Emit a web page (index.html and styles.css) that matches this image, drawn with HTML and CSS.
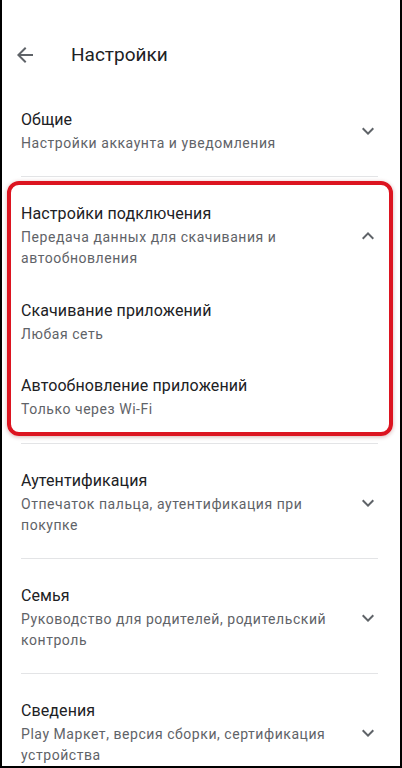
FILE: index.html
```html
<!DOCTYPE html>
<html lang="ru">
<head>
<meta charset="utf-8">
<title>Настройки</title>
<link rel="stylesheet" href="styles.css">
</head>
<body>
<div class="screen">
  <header class="topbar">
    <svg class="back" viewBox="0 0 24 24" width="24" height="24"><path d="M20 11H7.83l5.59-5.59L12 4l-8 8 8 8 1.41-1.41L7.83 13H20v-2z"/></svg>
    <h1 class="page-title">Настройки</h1>
  </header>
  <main class="list">
    <section class="group">
      <div class="row">
        <div class="text">
          <div class="title">Общие</div>
          <div class="sub">Настройки аккаунта и уведомления</div>
        </div>
        <svg class="chev" viewBox="0 0 24 24" width="24" height="24"><path d="M16.59 8.59L12 13.17 7.41 8.59 6 10l6 6 6-6z"/></svg>
      </div>
    </section>
    <section class="group highlighted">
      <div class="row">
        <div class="text">
          <div class="title">Настройки подключения</div>
          <div class="sub">Передача данных для скачивания и автообновления</div>
        </div>
        <svg class="chev" viewBox="0 0 24 24" width="24" height="24"><path d="M7.41 15.41L12 10.83l4.59 4.58L18 14l-6-6-6 6z"/></svg>
      </div>
      <div class="subitem">
        <div class="title">Скачивание приложений</div>
        <div class="sub">Любая сеть</div>
      </div>
      <div class="subitem">
        <div class="title">Автообновление приложений</div>
        <div class="sub">Только через Wi-Fi</div>
      </div>
    </section>
    <section class="group">
      <div class="row">
        <div class="text">
          <div class="title">Аутентификация</div>
          <div class="sub">Отпечаток пальца, аутентификация при покупке</div>
        </div>
        <svg class="chev" viewBox="0 0 24 24" width="24" height="24"><path d="M16.59 8.59L12 13.17 7.41 8.59 6 10l6 6 6-6z"/></svg>
      </div>
    </section>
    <section class="group">
      <div class="row">
        <div class="text">
          <div class="title">Семья</div>
          <div class="sub">Руководство для родителей, родительский контроль</div>
        </div>
        <svg class="chev" viewBox="0 0 24 24" width="24" height="24"><path d="M16.59 8.59L12 13.17 7.41 8.59 6 10l6 6 6-6z"/></svg>
      </div>
    </section>
    <section class="group">
      <div class="row">
        <div class="text">
          <div class="title">Сведения</div>
          <div class="sub">Play Маркет, версия сборки, сертификация устройства</div>
        </div>
        <svg class="chev" viewBox="0 0 24 24" width="24" height="24"><path d="M16.59 8.59L12 13.17 7.41 8.59 6 10l6 6 6-6z"/></svg>
      </div>
    </section>
  </main>
</div>
</body>
</html>
```
FILE: styles.css
```css
* { box-sizing: border-box; }
html, body { margin: 0; padding: 0; background: #fff; }
body { font-family: Roboto, "Noto Sans", "Liberation Sans", sans-serif; }
.screen {
  width: 402px;
  height: 768px;
  overflow: hidden;
  background: #fff;
  border: 2px solid #000;
  border-top: none;
  position: relative;
}
.topbar {
  display: flex;
  align-items: center;
  height: 83px;
  padding: 43px 0 16px 11px;
}
.back { fill: #5f6368; flex: none; }
.page-title {
  margin: 0 0 0 34px;
  font-size: 19px;
  font-weight: 400;
  line-height: 24px;
  color: #202124;
}
.list { margin: 0 22px 0 19px; }
.group {
  border-bottom: 1px solid #e3e4e6;
  padding: 25px 0 22px;
  position: relative;
}
.row { display: flex; align-items: center; }
.text { flex: 1; min-width: 0; padding-right: 24px; }
.title {
  font-size: 16px;
  line-height: 24px;
  letter-spacing: 0.1px;
  color: #202124;
}
.sub {
  margin-top: 1px;
  font-size: 14px;
  line-height: 21px;
  letter-spacing: 0.55px;
  color: #5f6368;
}
.chev { fill: #5f6368; flex: none; margin-right: -2px; }
.subitem { padding-top: 30px; }
.subitem + .subitem { padding-top: 29px; }
.highlighted { padding-bottom: 23px; }
.highlighted::after {
  content: "";
  position: absolute;
  left: -14px;
  right: -15px;
  top: 4px;
  bottom: 7px;
  border: 4px solid #dc1420;
  border-radius: 12px;
  box-shadow: 0 1px 4px rgba(120, 0, 0, 0.3);
  pointer-events: none;
}
```
